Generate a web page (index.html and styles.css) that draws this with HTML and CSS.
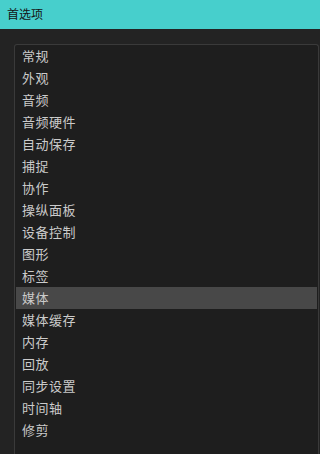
FILE: index.html
```html
<!DOCTYPE html>
<html lang="zh-CN">
<head>
<meta charset="utf-8">
<title>首选项</title>
<link rel="stylesheet" href="styles.css">
</head>
<body>
<header class="titlebar">首选项</header>
<main class="content">
  <ul class="nav-list">
    <li class="nav-item">常规</li>
    <li class="nav-item">外观</li>
    <li class="nav-item">音频</li>
    <li class="nav-item">音频硬件</li>
    <li class="nav-item">自动保存</li>
    <li class="nav-item">捕捉</li>
    <li class="nav-item">协作</li>
    <li class="nav-item">操纵面板</li>
    <li class="nav-item">设备控制</li>
    <li class="nav-item">图形</li>
    <li class="nav-item">标签</li>
    <li class="nav-item selected">媒体</li>
    <li class="nav-item">媒体缓存</li>
    <li class="nav-item">内存</li>
    <li class="nav-item">回放</li>
    <li class="nav-item">同步设置</li>
    <li class="nav-item">时间轴</li>
    <li class="nav-item">修剪</li>
  </ul>
</main>
</body>
</html>
```

FILE: styles.css
```css
html, body {
  margin: 0;
  padding: 0;
  height: 100%;
  overflow: hidden;
}
body {
  background: #232323;
  font-family: "Noto Sans CJK SC", "Noto Sans", sans-serif;
}
.titlebar {
  height: 29px;
  line-height: 28px;
  background: #47cfcc;
  color: #141414;
  font-size: 12px;
  padding-left: 7px;
  box-sizing: border-box;
}
.content {
  padding: 15px 1px 0 14px;
}
.nav-list {
  list-style: none;
  margin: 0;
  padding: 0 1px;
  background: #1e1e1e;
  border: 1px solid #3a3a3a;
  border-bottom: none;
  border-radius: 3px 3px 0 0;
  min-height: 430px;
}
.nav-item {
  height: 22px;
  line-height: 22px;
  padding-left: 6px;
  color: #cbcbcb;
  font-size: 13px;
  letter-spacing: 0.5px;
}
.nav-item.selected {
  background: #484848;
}
```
